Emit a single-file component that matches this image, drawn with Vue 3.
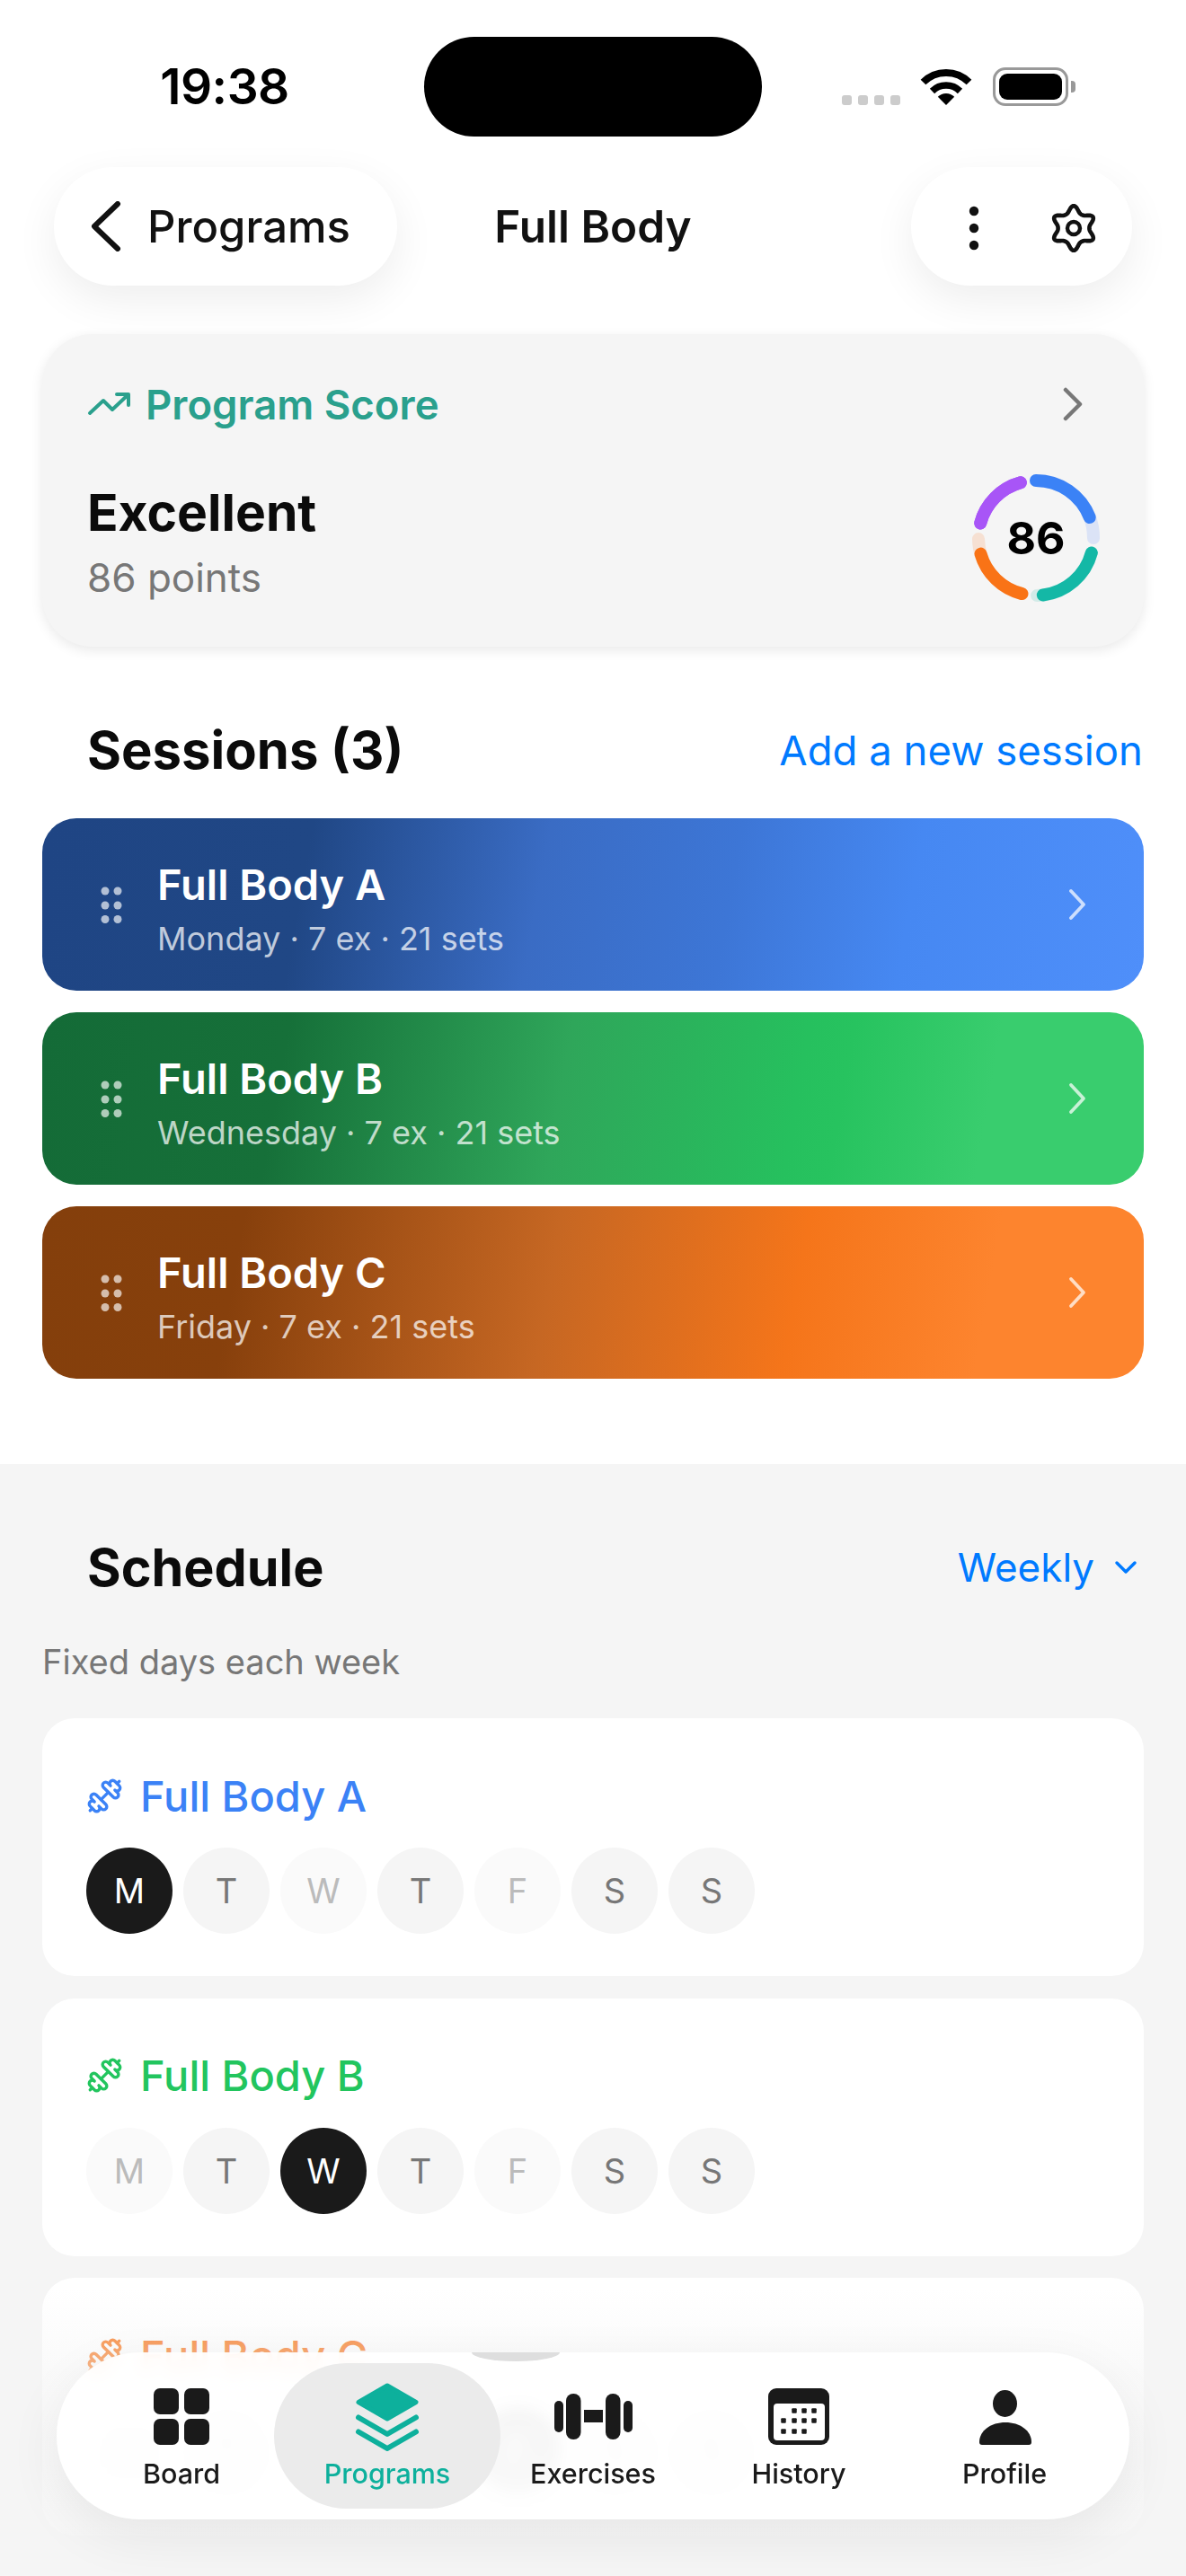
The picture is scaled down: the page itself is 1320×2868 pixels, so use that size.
<script setup>
const polar = (r, deg) => {
  const a = (deg - 90) * Math.PI / 180
  return [80 + r * Math.cos(a), 80 + r * Math.sin(a)]
}
const arc = (from, to, r = 64) => {
  const [x1, y1] = polar(r, from)
  const [x2, y2] = polar(r, to)
  return `M${x1.toFixed(2)} ${y1.toFixed(2)}A${r} ${r} 0 ${to - from > 180 ? 1 : 0} 1 ${x2.toFixed(2)} ${y2.toFixed(2)}`
}
const ring = [
  { color: '#3b82f6', track: '#dbe3f6', from: 0, end: 90, to: 69 },
  { color: '#14b8a6', track: '#d3ebe8', from: 105, end: 179, to: 173 },
  { color: '#f97316', track: '#f6e0d2', from: 194, end: 269, to: 254 },
  { color: '#a855f7', track: '#a855f7', from: 285, end: 344.5, to: 344.5 },
].map(s => ({ ...s, trackPath: arc(s.from, s.end), valuePath: arc(s.from, s.to) }))

const gearPath = (() => {
  const pts = []
  for (let i = 0; i < 180; i++) {
    const t = i * 2
    const c = Math.cos(6 * t * Math.PI / 180)
    const r = 20.5 + 3.7 * c + 0.6 * Math.cos(12 * t * Math.PI / 180)
    const a = (t - 90) * Math.PI / 180
    pts.push(`${(28 + r * Math.cos(a)).toFixed(2)} ${(28 + r * Math.sin(a)).toFixed(2)}`)
  }
  return 'M' + pts.join('L') + 'Z'
})()

const sessions = [
  { name: 'Full Body A', sub: 'Monday · 7 ex · 21 sets', cls: 'blue' },
  { name: 'Full Body B', sub: 'Wednesday · 7 ex · 21 sets', cls: 'green' },
  { name: 'Full Body C', sub: 'Friday · 7 ex · 21 sets', cls: 'orange' },
]
const letters = ['M', 'T', 'W', 'T', 'F', 'S', 'S']
const schedule = [
  { name: 'Full Body A', color: 'c-blue', active: 0 },
  { name: 'Full Body B', color: 'c-green', active: 2 },
  { name: 'Full Body C', color: 'c-orange', active: 4 },
]
const dayClass = (s, i) => {
  if (i === s.active) return 'on'
  const muted = [0, 2, 4].includes(i)
  return muted ? 'off' : ''
}
const dotRows = [
  { y: 31, xs: [45, 56, 67] },
  { y: 42, xs: [33, 45, 56, 67] },
  { y: 54, xs: [33, 45, 56] },
]
</script>

<template>
  <div class="page">
    <div class="status">
      <div class="time">19:38</div>
      <div class="island"></div>
      <div class="status-right">
        <div class="signal"><i></i><i></i><i></i><i></i></div>
        <svg class="wifi" width="58" height="42" viewBox="0 0 58 42">
          <path d="M29 42L19.8 32.800A13 13 0 0 1 38.200 32.800Z" fill="#000" />
          <path d="M13.500 26.500A22 22 0 0 1 44.500 26.500" fill="none" stroke="#000" stroke-width="7.500" />
          <path d="M3.500 16.500A36 36 0 0 1 54.500 16.500" fill="none" stroke="#000" stroke-width="8" />
        </svg>
        <div class="battery"><div class="battery-fill"></div></div>
        <div class="battery-nub"></div>
      </div>
    </div>

    <header class="topbar">
      <div class="pill back">
        <svg width="35" height="56" viewBox="0 0 35 56">
          <path d="M31 3L5 28L31 53" fill="none" stroke="#111" stroke-width="6" stroke-linecap="round" stroke-linejoin="round" />
        </svg>
        <span>Programs</span>
      </div>
      <div class="title">Full Body</div>
      <div class="pill actions">
        <svg width="12" height="50" viewBox="0 0 12 50">
          <circle cx="6" cy="6" r="5.200" fill="#111" />
          <circle cx="6" cy="25" r="5.200" fill="#111" />
          <circle cx="6" cy="44" r="5.200" fill="#111" />
        </svg>
        <svg width="56" height="56" viewBox="0 0 56 56">
          <path :d="gearPath" fill="none" stroke="#111" stroke-width="4.600" stroke-linejoin="round" />
          <circle cx="28" cy="28" r="7" fill="none" stroke="#111" stroke-width="4.400" />
        </svg>
      </div>
    </header>

    <section class="score">
      <div class="score-head">
        <div class="score-label">
          <svg width="48" height="28" viewBox="0 0 48 28">
            <path d="M3 24L18 10L28 20L45 4" fill="none" stroke="#2aa08d" stroke-width="4" stroke-linecap="round" stroke-linejoin="round" />
            <path d="M33 3H46V15" fill="none" stroke="#2aa08d" stroke-width="4" stroke-linecap="round" stroke-linejoin="round" />
          </svg>
          <span>Program Score</span>
        </div>
        <svg class="score-chevron" width="24" height="38" viewBox="0 0 24 38">
          <path d="M4 3L20 19L4 35" fill="none" stroke="#777" stroke-width="4.500" stroke-linecap="round" stroke-linejoin="round" />
        </svg>
      </div>
      <div class="score-body">
        <div class="score-text">
          <div class="excellent">Excellent</div>
          <div class="points">86 points</div>
        </div>
        <div class="ring">
          <svg width="160" height="160" viewBox="0 0 160 160">
            <template v-for="s in ring" :key="s.from">
              <path :d="s.trackPath" fill="none" :stroke="s.track" stroke-width="14" stroke-linecap="round" />
              <path :d="s.valuePath" fill="none" :stroke="s.color" stroke-width="14" stroke-linecap="round" />
            </template>
          </svg>
          <div class="ring-num">86</div>
        </div>
      </div>
    </section>

    <div class="sessions-head">
      <h2>Sessions (3)</h2>
      <span class="link">Add a new session</span>
    </div>

    <div class="sessions">
      <div v-for="s in sessions" :key="s.name" class="session" :class="s.cls">
        <svg class="grip" width="24" height="42" viewBox="0 0 24 42">
          <g fill="#fff" fill-opacity="0.66">
            <circle cx="5" cy="5" r="4.500" /><circle cx="19" cy="5" r="4.500" />
            <circle cx="5" cy="21" r="4.500" /><circle cx="19" cy="21" r="4.500" />
            <circle cx="5" cy="36.500" r="4.500" /><circle cx="19" cy="36.500" r="4.500" />
          </g>
        </svg>
        <div class="session-text">
          <div class="session-name">{{ s.name }}</div>
          <div class="session-sub">{{ s.sub }}</div>
        </div>
        <svg class="session-chevron" width="22" height="36" viewBox="0 0 22 36">
          <path d="M4 3L18 18L4 33" fill="none" stroke="#fff" stroke-opacity="0.72" stroke-width="3.800" stroke-linecap="round" stroke-linejoin="round" />
        </svg>
      </div>
    </div>

    <section class="gray">
      <div class="schedule-head">
        <h2>Schedule</h2>
        <div class="weekly">
          <span>Weekly</span>
          <svg width="26" height="18" viewBox="0 0 26 18">
            <path d="M3 4L13 14L23 4" fill="none" stroke="#007aff" stroke-width="3.500" stroke-linecap="round" stroke-linejoin="round" />
          </svg>
        </div>
      </div>
      <div class="fixed">Fixed days each week</div>
      <div class="plans">
        <div v-for="p in schedule" :key="p.name" class="plan">
          <div class="plan-title" :class="p.color">
            <svg width="41" height="41" viewBox="0 0 24 24" fill="none" stroke="currentColor" stroke-width="2" stroke-linecap="round" stroke-linejoin="round">
              <path d="M17.596 12.768a2 2 0 1 0 2.829-2.829l-1.768-1.767a2 2 0 0 0 2.828-2.829l-2.828-2.828a2 2 0 0 0-2.829 2.828l-1.767-1.768a2 2 0 1 0-2.829 2.829z" />
              <path d="m2.500 21.500 1.400-1.400" />
              <path d="m20.100 3.900 1.400-1.400" />
              <path d="M5.343 21.485a2 2 0 1 0 2.829-2.828l1.767 1.768a2 2 0 1 0 2.829-2.829l-6.364-6.364a2 2 0 1 0-2.829 2.829l1.768 1.767a2 2 0 0 0-2.828 2.829z" />
              <path d="m9.600 14.400 4.800-4.800" />
            </svg>
            <span>{{ p.name }}</span>
          </div>
          <div class="days">
            <div v-for="(l, i) in letters" :key="i" class="day" :class="dayClass(p, i)">{{ l }}</div>
          </div>
        </div>
      </div>
    </section>

    <div class="fade"></div>

    <nav class="tabs">
      <div class="lens"></div>
      <div class="tab">
        <svg width="100" height="76" viewBox="0 0 100 76" fill="#1a1a1a">
          <rect x="19" y="6" width="28" height="29" rx="7" />
          <rect x="53" y="6" width="28" height="29" rx="7" />
          <rect x="19" y="40" width="28" height="29" rx="7" />
          <rect x="53" y="40" width="28" height="29" rx="7" />
        </svg>
        <span>Board</span>
      </div>
      <div class="tab active">
        <svg width="100" height="76" viewBox="0 0 100 76">
          <path d="M50 3L82 21.500L50 40L18 21.500Z" fill="#0db09c" stroke="#0db09c" stroke-width="5" stroke-linejoin="round" />
          <path d="M18 38.500L50 57L82 38.500" fill="none" stroke="#0db09c" stroke-width="6" stroke-linecap="round" stroke-linejoin="round" />
          <path d="M18 54.500L50 73L82 54.500" fill="none" stroke="#0db09c" stroke-width="6" stroke-linecap="round" stroke-linejoin="round" />
        </svg>
        <span>Programs</span>
      </div>
      <div class="tab">
        <svg width="100" height="76" viewBox="0 0 100 76" fill="#1a1a1a">
          <rect x="7" y="20" width="10" height="35" rx="5" />
          <rect x="20" y="12" width="16.500" height="51" rx="8" />
          <rect x="40" y="30" width="21" height="14" />
          <rect x="64" y="12" width="16.500" height="51" rx="8" />
          <rect x="84" y="20" width="10" height="35" rx="5" />
        </svg>
        <span>Exercises</span>
      </div>
      <div class="tab">
        <svg width="100" height="76" viewBox="0 0 100 76">
          <rect x="16" y="6" width="68" height="63" rx="9" fill="#1a1a1a" />
          <rect x="22" y="23" width="57" height="41" rx="4" fill="#fff" />
          <template v-for="r in dotRows" :key="r.y">
            <rect v-for="x in r.xs" :key="x" :x="x - 2.750" :y="r.y - 2.750" width="5.500" height="5.500" rx="1" fill="#1a1a1a" />
          </template>
        </svg>
        <span>History</span>
      </div>
      <div class="tab">
        <svg width="100" height="76" viewBox="0 0 100 76" fill="#1a1a1a">
          <ellipse cx="50.500" cy="23" rx="13.500" ry="15" />
          <path d="M22 66C22 53 35 44 51 44C67 44 80 53 80 66Q80 69 77 69H25Q22 69 22 66Z" />
        </svg>
        <span>Profile</span>
      </div>
    </nav>
  </div>
</template>

<style scoped>
.page {
  position: relative;
  width: 1320px;
  height: 2868px;
  overflow: hidden;
  background: #fff;
  font-family: Inter, "Liberation Sans", sans-serif;
  color: #0f0f0f;
}
.status {
  display: grid;
  grid-template-columns: 472px 376px 1fr;
  height: 186px;
  padding-top: 41px;
  box-sizing: border-box;
}
.time {
  height: 111px;
  line-height: 111px;
  padding-left: 28px;
  text-align: center;
  font-size: 55px;
  font-weight: 600;
  color: #000;
  letter-spacing: -0.5px;
}
.island {
  height: 111px;
  background: #000;
  border-radius: 56px;
}
.status-right {
  display: flex;
  align-items: flex-start;
  padding-left: 89px;
}
.signal {
  display: flex;
  gap: 7px;
  margin-top: 65px;
}
.signal i {
  width: 11px;
  height: 11px;
  border-radius: 3px;
  background: #ccc;
}
.wifi {
  margin: 34px 0 0 22px;
}
.battery {
  box-sizing: border-box;
  width: 84px;
  height: 43px;
  margin: 34px 0 0 23px;
  padding: 4px;
  border: 3px solid #999;
  border-radius: 14px;
}
.battery-fill {
  width: 100%;
  height: 100%;
  background: #000;
  border-radius: 9px;
}
.battery-nub {
  width: 5px;
  height: 13px;
  margin: 49px 0 0 3px;
  background: #999;
  border-radius: 0 4px 4px 0;
}
.topbar {
  display: grid;
  grid-template-columns: 1fr auto 1fr;
  align-items: center;
  height: 132px;
  padding: 0 60px;
}
.pill {
  display: flex;
  align-items: center;
  height: 132px;
  box-sizing: border-box;
  background: #fff;
  border-radius: 66px;
  box-shadow: 0 16px 48px rgba(0, 0, 0, 0.07);
}
.back {
  justify-self: start;
  width: 382px;
  padding-left: 40px;
  gap: 29px;
  font-size: 49px;
  font-weight: 500;
  color: #111;
}
.title {
  font-size: 49.500px;
  font-weight: 600;
  color: #111;
}
.actions {
  justify-self: end;
  width: 246px;
  padding: 3px 0 0 64px;
  gap: 77px;
}
.score {
  margin: 54px 47px 0;
  height: 348px;
  box-sizing: border-box;
  padding: 54px 50px 0;
  background: #f5f5f5;
  border-radius: 56px;
  box-shadow: 0 4px 14px rgba(0, 0, 0, 0.09);
}
.score-head {
  display: flex;
  align-items: center;
  justify-content: space-between;
  height: 48px;
}
.score-label {
  display: flex;
  align-items: center;
  gap: 17px;
  font-size: 45.500px;
  font-weight: 600;
  color: #2aa08d;
}
.score-chevron {
  margin-right: 17px;
}
.score-body {
  display: flex;
  align-items: center;
  justify-content: space-between;
  height: 160px;
  margin-top: 45px;
}
.score-text {
  margin-top: 9px;
}
.excellent {
  font-size: 57px;
  line-height: 64px;
  font-weight: 700;
  color: #0b0b0b;
}
.points {
  margin-top: 14px;
  font-size: 44px;
  line-height: 52px;
  color: #777;
}
.ring {
  position: relative;
  width: 160px;
  height: 160px;
  margin-right: -10px;
}
.ring-num {
  position: absolute;
  inset: 0;
  display: flex;
  align-items: center;
  justify-content: center;
  font-size: 50px;
  font-weight: 700;
  color: #000;
}
h2 {
  margin: 0;
  font-size: 58px;
  font-weight: 700;
  color: #0b0b0b;
}
.schedule-head h2 {
  font-size: 57.500px;
}
.sessions-head {
  display: flex;
  align-items: center;
  justify-content: space-between;
  height: 72px;
  margin: 79px 48px 0 97px;
}
.link {
  font-size: 45.500px;
  color: #007aff;
}
.sessions {
  display: flex;
  flex-direction: column;
  gap: 24px;
  margin: 40px 47px 0;
}
.session {
  display: flex;
  align-items: center;
  height: 192px;
  padding-left: 65px;
  border-radius: 38px;
  color: #fff;
}
.blue {
  background: linear-gradient(100deg, #1f4584 0%, #204785 24%, #3a6cc4 45%, #3d76d6 62%, #4688f2 78%, #4f8ffa 100%);
}
.green {
  background: linear-gradient(100deg, #146b37 0%, #167039 22%, #2fa65a 47%, #26c05e 68%, #27c35f 72%, #39cd6e 85%, #39cd6e 100%);
}
.orange {
  background: linear-gradient(100deg, #843f0c 0%, #87400c 18%, #c66723 46%, #f5751a 68%, #fd842e 85%, #fd842e 100%);
}
.session-text {
  margin: 9px 0 0 39px;
  flex: 1;
}
.session-name {
  font-size: 47px;
  font-weight: 600;
  line-height: 56px;
}
.session-sub {
  margin-top: 10px;
  font-size: 36px;
  line-height: 44px;
  color: rgba(255, 255, 255, 0.72);
}
.grip {
  margin-top: 1px;
}
.session-chevron {
  margin-right: 63px;
}
.gray {
  margin-top: 95px;
  padding: 80px 47px 0;
  height: 1237px;
  box-sizing: border-box;
  background: #f5f5f5;
}
.schedule-head {
  display: flex;
  align-items: center;
  justify-content: space-between;
  height: 70px;
  padding: 0 7px 0 50px;
}
.weekly {
  display: flex;
  align-items: center;
  gap: 22px;
  font-size: 44px;
  color: #007aff;
}
.fixed {
  margin-top: 45px;
  font-size: 38px;
  line-height: 50px;
  color: #777;
}
.plans {
  display: flex;
  flex-direction: column;
  gap: 24.500px;
  margin-top: 38px;
}
.plan {
  height: 287px;
  box-sizing: border-box;
  padding: 58px 49px 0;
  background: #fff;
  border-radius: 36px;
}
.plan-title {
  display: flex;
  align-items: center;
  gap: 19px;
  height: 56px;
  font-size: 47px;
  font-weight: 500;
}
.c-blue { color: #3b82f6; }
.c-green { color: #22c55e; }
.c-orange { color: #f97316; }
.days {
  display: flex;
  gap: 12px;
  margin-top: 30px;
}
.day {
  width: 96px;
  height: 96px;
  border-radius: 50%;
  display: flex;
  align-items: center;
  justify-content: center;
  background: #f5f5f5;
  font-size: 38px;
  color: #777;
}
.day.on {
  background: #1a1a1a;
  color: #fff;
}
.day.off {
  background: #fafafa;
  color: #bbb;
}
.fade {
  position: absolute;
  left: 0;
  right: 0;
  bottom: 0;
  height: 320px;
  background: linear-gradient(to bottom, rgba(245, 245, 245, 0), rgba(245, 245, 245, 0.55) 30%, rgba(245, 245, 245, 0.9) 100%);
}
.tabs {
  position: absolute;
  left: 63px;
  right: 63px;
  bottom: 63px;
  height: 186px;
  box-sizing: border-box;
  padding: 12px 24.500px;
  display: grid;
  grid-template-columns: repeat(5, 229px);
  background: rgba(255, 255, 255, 0.9);
  backdrop-filter: blur(8px);
  border-radius: 93px;
  box-shadow: 0 18px 60px rgba(0, 0, 0, 0.07);
}
.lens {
  position: absolute;
  top: 0;
  left: 462px;
  width: 98px;
  height: 10px;
  background: #dedede;
  border-radius: 0 0 50% 50% / 0 0 100% 100%;
}
.tab {
  position: relative;
  display: flex;
  flex-direction: column;
  align-items: center;
  padding-top: 22px;
  gap: 7px;
  border-radius: 81px;
  font-size: 30.500px;
  line-height: 36px;
  font-weight: 500;
  color: #1a1a1a;
}
.tab.active {
  margin: 0 -11.500px;
  background: #ebebeb;
  color: #0db09c;
}
</style>

<style>
html, body { margin: 0; background: #fff; }
</style>
